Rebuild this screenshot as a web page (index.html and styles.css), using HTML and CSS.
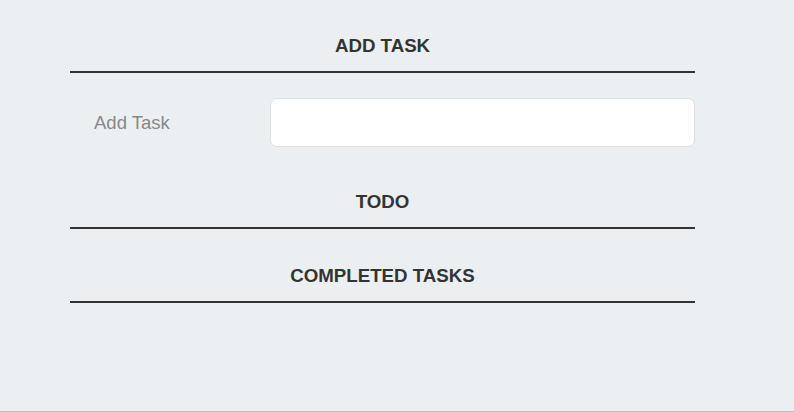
FILE: index.html
```html
<!DOCTYPE html>
<html>
<head>
<meta charset="utf-8">
<link rel="stylesheet" href="styles.css">
</head>
<body>
<div class="page">
  <div class="container">
    <h3 class="section-title">ADD TASK</h3>
    <div class="add-row">
      <label class="add-label" for="new-task">Add Task</label>
      <input class="add-input" id="new-task" type="text">
    </div>
    <h3 class="section-title todo-title">TODO</h3>
    <ul class="task-list"></ul>
    <h3 class="section-title done-title">COMPLETED TASKS</h3>
    <ul class="task-list"></ul>
  </div>
</div>
</body>
</html>
```
FILE: styles.css
```css
html, body {
  margin: 0;
  padding: 0;
}
body {
  background: #eceff1;
  color: #333;
  font-family: "Liberation Sans", Arial, sans-serif;
}
.page {
  box-sizing: border-box;
  height: 412px;
  border-bottom: 1px solid #b6bdc0;
}
.container {
  width: 625px;
  margin-left: 70px;
  padding-top: 35px;
}
.section-title {
  margin: 0;
  font-size: 18.72px;
  line-height: 21px;
  font-weight: bold;
  text-align: center;
  color: #333;
  padding-bottom: 15px;
  border-bottom: 2px solid #333;
}
.add-row {
  display: flex;
  align-items: center;
  margin-top: 25px;
}
.add-label {
  box-sizing: border-box;
  width: 200px;
  padding-left: 24px;
  font-size: 18.5px;
  color: #888;
}
.add-input {
  box-sizing: border-box;
  width: 425px;
  height: 49px;
  margin: 0;
  border: 1px solid #dcdfe0;
  border-radius: 7px;
  background: #fff;
  font-size: 18px;
  padding: 0 10px;
  outline: none;
}
.todo-title {
  margin-top: 44px;
}
.done-title {
  margin-top: 36px;
}
.task-list {
  margin: 0;
  padding: 0;
  list-style: none;
}
```
